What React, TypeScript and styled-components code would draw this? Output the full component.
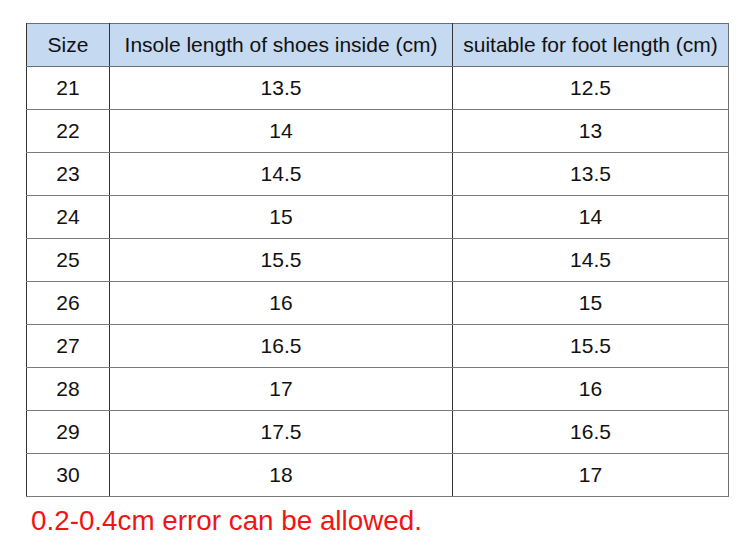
import React, { ReactElement } from "react"
import styled, { createGlobalStyle } from "styled-components"

const rows: [string, string, string][] = [
	["21", "13.5", "12.5"],
	["22", "14", "13"],
	["23", "14.5", "13.5"],
	["24", "15", "14"],
	["25", "15.5", "14.5"],
	["26", "16", "15"],
	["27", "16.5", "15.5"],
	["28", "17", "16"],
	["29", "17.5", "16.5"],
	["30", "18", "17"],
]

const GlobalStyle = createGlobalStyle`
	body {
		margin: 0;
		background: #ffffff;
		font-family: "Liberation Sans", Arial, sans-serif;
	}
`

const Page = styled.div`
	width: 750px;
	height: 552px;
	padding: 23px 0 0 26px;
	box-sizing: border-box;
`

const Table = styled.table`
	width: 699px;
	border-collapse: collapse;
	table-layout: fixed;
	border: 1px solid #6e6e6e;
`

const Head = styled.th<{ $width: number }>`
	width: ${(p): number => p.$width}px;
	height: 41px;
	padding: 0 0 1px;
	background: #c5d9f1;
	font-weight: normal;
	font-size: 21px;
	color: #111;
	border-left: 1px solid #333;
	border-bottom: 1px solid #6e6e6e;
	white-space: nowrap;
`

const Cell = styled.td`
	height: 41px;
	padding: 0 0 1px;
	text-align: center;
	font-size: 21px;
	color: #111;
	border-left: 1px solid #333;
	border-bottom: 1px solid #7a7a7a;
`

const Note = styled.div`
	margin: 8px 0 0 5px;
	font-size: 27.8px;
	color: #f01414;
`

export default function App(): ReactElement {
	return (
		<Page>
			<GlobalStyle />
			<Table>
				<thead>
					<tr>
						<Head $width={82}>Size</Head>
						<Head $width={342}>Insole length of shoes inside (cm)</Head>
						<Head $width={275}>suitable for foot length (cm)</Head>
					</tr>
				</thead>
				<tbody>
					{rows.map(([size, insole, foot]) => (
						<tr key={size}>
							<Cell>{size}</Cell>
							<Cell>{insole}</Cell>
							<Cell>{foot}</Cell>
						</tr>
					))}
				</tbody>
			</Table>
			<Note>0.2-0.4cm error can be allowed.</Note>
		</Page>
	)
}
